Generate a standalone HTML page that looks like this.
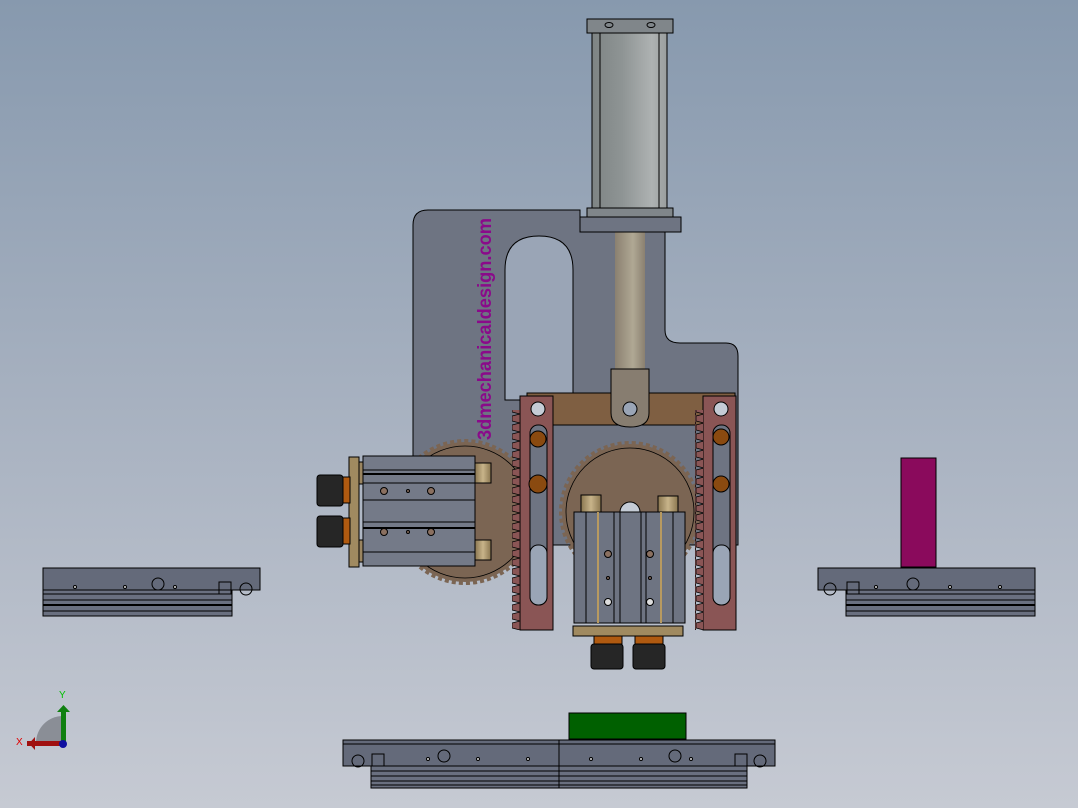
<!DOCTYPE html>
<html><head><meta charset="utf-8"><style>
html,body{margin:0;padding:0;width:1078px;height:808px;overflow:hidden}
svg{display:block}
</style></head><body>
<svg width="1078" height="808" viewBox="0 0 1078 808" xmlns="http://www.w3.org/2000/svg">
<defs>
<linearGradient id="bg" x1="0" y1="0" x2="0" y2="1">
<stop offset="0" stop-color="#8799ae"/><stop offset="0.5" stop-color="#a7b1c0"/><stop offset="1" stop-color="#c6cad3"/></linearGradient>
<linearGradient id="barrel" x1="0" x2="1">
<stop offset="0" stop-color="#7e8484"/><stop offset="0.4" stop-color="#8e9494"/><stop offset="0.8" stop-color="#aeb2b2"/><stop offset="1" stop-color="#9a9e9e"/></linearGradient>
<linearGradient id="rod" x1="0" x2="1">
<stop offset="0" stop-color="#8a8070"/><stop offset="0.6" stop-color="#b0a894"/><stop offset="1" stop-color="#8a8070"/></linearGradient>
<linearGradient id="pin" x1="0" x2="1">
<stop offset="0" stop-color="#8a7650"/><stop offset="0.5" stop-color="#c8b48a"/><stop offset="1" stop-color="#8a7650"/></linearGradient>
<pattern id="teethL" width="8" height="9" patternUnits="userSpaceOnUse"><path d="M8 0 L0 2 L0 7 L8 9 Z" fill="#8a5555" stroke="#000" stroke-width="0.8"/></pattern>
</defs>
<rect width="1078" height="808" fill="url(#bg)"/>

<!-- plate -->
<path d="M428 210 H580 V232 H665 V330 Q665 343 680 343 H726 Q738 343 738 356 V545 H413 V225 Q413 210 428 210 Z" fill="#6e7482" stroke="#000" stroke-width="1"/>
<path d="M505 270 Q505 236 539 236 Q573 236 573 270 V400 H505 Z" fill="#9aa5b6" stroke="#000" stroke-width="1"/>

<!-- cylinder -->
<rect x="615" y="232" width="30" height="140" fill="url(#rod)"/>
<rect x="592" y="33" width="75" height="176" fill="url(#barrel)" stroke="#000"/>
<line x1="600" y1="33" x2="600" y2="208" stroke="#000"/><line x1="659" y1="33" x2="659" y2="208" stroke="#000"/>
<rect x="587" y="19" width="86" height="14" fill="#80868a" stroke="#000"/>
<ellipse cx="609" cy="25" rx="4" ry="2.5" fill="none" stroke="#000"/><ellipse cx="651" cy="25" rx="4" ry="2.5" fill="none" stroke="#000"/>
<rect x="587" y="208" width="86" height="9" fill="#80868a" stroke="#000"/>
<rect x="580" y="217" width="101" height="15" fill="#6e7482" stroke="#000"/>

<!-- bracket -->
<rect x="527" y="393" width="208" height="32" fill="#7f5f42" stroke="#000"/>
<path d="M611 369 H649 V413 Q649 427 630 427 Q611 427 611 413 Z" fill="#877d70" stroke="#000"/>
<circle cx="630" cy="409" r="7" fill="#9aa5b6" stroke="#000"/>

<!-- gears -->
<g fill="#7b6553" stroke="#000" stroke-width="0.8">
<circle cx="465" cy="512" r="70" stroke-dasharray="4 3" stroke-width="6" stroke="#7b6553"/>
<circle cx="465" cy="512" r="66"/>
<circle cx="630" cy="512" r="68" stroke-dasharray="4 3" stroke-width="6" stroke="#7b6553"/>
<circle cx="630" cy="512" r="64"/>
</g>

<!-- racks -->
<rect x="520" y="396" width="33" height="234" fill="#8a5555" stroke="#000"/>
<rect x="512" y="410" width="8" height="220" fill="url(#teethL)"/>
<rect x="703" y="396" width="33" height="234" fill="#8a5555" stroke="#000"/>
<rect x="695" y="410" width="8" height="220" fill="url(#teethL)"/>
<rect x="530" y="425" width="17" height="180" rx="8" fill="#6e7482" stroke="#000"/>
<rect x="713" y="425" width="17" height="180" rx="8" fill="#6e7482" stroke="#000"/>
<rect x="530" y="545" width="17" height="60" rx="8" fill="#9aa5b6" stroke="#000"/>
<rect x="713" y="545" width="17" height="60" rx="8" fill="#9aa5b6" stroke="#000"/>
<circle cx="538" cy="409" r="7" fill="#c5ccd6" stroke="#000"/><circle cx="721" cy="409" r="7" fill="#c5ccd6" stroke="#000"/>
<g fill="#8a4a10" stroke="#000"><circle cx="538" cy="439" r="8"/><circle cx="538" cy="484" r="9"/><circle cx="721" cy="437" r="8"/><circle cx="721" cy="484" r="8"/></g>

<!-- left gripper -->
<rect x="475" y="463" width="16" height="20" fill="url(#pin)" stroke="#000"/>
<rect x="475" y="540" width="16" height="20" fill="url(#pin)" stroke="#000"/>
<rect x="363" y="456" width="112" height="110" fill="#747a88" stroke="#000"/>
<g stroke="#000" stroke-width="1"><line x1="363" y1="470" x2="475" y2="470"/><line x1="363" y1="474" x2="475" y2="474" stroke-width="2"/><line x1="363" y1="483" x2="475" y2="483"/><line x1="363" y1="500" x2="475" y2="500"/><line x1="363" y1="522" x2="475" y2="522"/><line x1="363" y1="528" x2="475" y2="528" stroke-width="2"/><line x1="363" y1="552" x2="475" y2="552"/></g>
<g fill="#8a7060" stroke="#000"><circle cx="384" cy="491" r="3.5"/><circle cx="431" cy="491" r="3.5"/><circle cx="384" cy="532" r="3.5"/><circle cx="431" cy="532" r="3.5"/><circle cx="408" cy="491" r="1.5"/><circle cx="408" cy="532" r="1.5"/></g>
<rect x="356" y="462" width="7" height="22" fill="#9a8560" stroke="#000"/><rect x="356" y="540" width="7" height="22" fill="#9a8560" stroke="#000"/>
<rect x="349" y="457" width="10" height="110" fill="#a08a60" stroke="#000"/>
<rect x="341" y="477" width="9" height="26" fill="#b05a10" stroke="#000"/><rect x="341" y="518" width="9" height="26" fill="#b05a10" stroke="#000"/>
<rect x="317" y="475" width="26" height="31" rx="3" fill="#262626" stroke="#000"/><rect x="317" y="516" width="26" height="31" rx="3" fill="#262626" stroke="#000"/>

<!-- center gripper -->
<rect x="581" y="495" width="20" height="17" fill="url(#pin)" stroke="#000"/>
<rect x="658" y="496" width="20" height="16" fill="url(#pin)" stroke="#000"/>
<path d="M620 512 A10 10 0 0 1 640 512 Z" fill="#c5ccd6" stroke="#000"/>
<rect x="574" y="512" width="111" height="111" fill="#6e7482" stroke="#000"/>
<g stroke="#000"><line x1="586" y1="512" x2="586" y2="623"/><line x1="598" y1="512" x2="598" y2="623" stroke="#b89a60" stroke-width="2"/><line x1="614" y1="512" x2="614" y2="623"/><line x1="620" y1="512" x2="620" y2="623"/><line x1="641" y1="512" x2="641" y2="623"/><line x1="646" y1="512" x2="646" y2="623"/><line x1="661" y1="512" x2="661" y2="623" stroke="#b89a60" stroke-width="2"/><line x1="673" y1="512" x2="673" y2="623"/></g>
<g fill="#8a7060" stroke="#000"><circle cx="608" cy="554" r="3.5"/><circle cx="650" cy="554" r="3.5"/><circle cx="608" cy="602" r="3.5" fill="#ddd"/><circle cx="650" cy="602" r="3.5" fill="#ddd"/><circle cx="608" cy="578" r="1.5"/><circle cx="650" cy="578" r="1.5"/></g>
<rect x="573" y="626" width="110" height="10" fill="#a08a60" stroke="#000"/>
<rect x="594" y="636" width="28" height="8" fill="#b05a10" stroke="#000"/><rect x="635" y="636" width="28" height="8" fill="#b05a10" stroke="#000"/>
<rect x="591" y="644" width="32" height="25" rx="3" fill="#262626" stroke="#000"/><rect x="633" y="644" width="32" height="25" rx="3" fill="#262626" stroke="#000"/>

<!-- text -->
<text transform="translate(491,440) rotate(-90)" font-family="'Liberation Sans',sans-serif" font-size="19.5" font-weight="bold" fill="#8a0a8a" textLength="222" lengthAdjust="spacingAndGlyphs">3dmechanicaldesign.com</text>

<!-- magenta block -->
<rect x="901" y="458" width="35" height="109" fill="#8a0a5c" stroke="#000"/>
<!-- green block -->
<rect x="569" y="713" width="117" height="26" fill="#006000" stroke="#000"/>

<!-- conveyors -->
<g stroke="#000" stroke-width="1">
<rect x="43" y="590" width="189" height="26" fill="#6a7080"/>
<rect x="43" y="568" width="217" height="22" fill="#646a7a"/>
<line x1="43" y1="594" x2="232" y2="594"/><line x1="43" y1="600" x2="232" y2="600"/><line x1="43" y1="605" x2="232" y2="605" stroke-width="2"/><line x1="43" y1="611" x2="232" y2="611"/>
<circle cx="158" cy="584" r="6" fill="none"/><circle cx="75" cy="587" r="1.5" fill="#ddd"/><circle cx="125" cy="587" r="1.5" fill="#ddd"/><circle cx="175" cy="587" r="1.5" fill="#ddd"/>
<rect x="219" y="582" width="12" height="12" fill="none"/><circle cx="246" cy="589" r="6" fill="none"/>

<rect x="846" y="590" width="189" height="26" fill="#6a7080"/>
<rect x="818" y="568" width="217" height="22" fill="#646a7a"/>
<line x1="846" y1="594" x2="1035" y2="594"/><line x1="846" y1="600" x2="1035" y2="600"/><line x1="846" y1="605" x2="1035" y2="605" stroke-width="2"/><line x1="846" y1="611" x2="1035" y2="611"/>
<circle cx="913" cy="584" r="6" fill="none"/><circle cx="876" cy="587" r="1.5" fill="#ddd"/><circle cx="950" cy="587" r="1.5" fill="#ddd"/><circle cx="1000" cy="587" r="1.5" fill="#ddd"/>
<rect x="847" y="582" width="12" height="12" fill="none"/><circle cx="830" cy="589" r="6" fill="none"/>

<rect x="371" y="766" width="376" height="22" fill="#6a7080"/>
<rect x="343" y="740" width="432" height="26" fill="#646a7a"/>
<line x1="343" y1="744" x2="775" y2="744"/><line x1="559" y1="740" x2="559" y2="788"/>
<line x1="371" y1="771" x2="747" y2="771"/><line x1="371" y1="776" x2="747" y2="776"/><line x1="371" y1="781" x2="747" y2="781"/><line x1="371" y1="785" x2="747" y2="785"/>
<circle cx="444" cy="756" r="6" fill="none"/><circle cx="675" cy="756" r="6" fill="none"/>
<circle cx="428" cy="759" r="1.5" fill="#ddd"/><circle cx="478" cy="759" r="1.5" fill="#ddd"/><circle cx="528" cy="759" r="1.5" fill="#ddd"/><circle cx="591" cy="759" r="1.5" fill="#ddd"/><circle cx="641" cy="759" r="1.5" fill="#ddd"/><circle cx="691" cy="759" r="1.5" fill="#ddd"/>
<rect x="372" y="754" width="12" height="12" fill="none"/><rect x="735" y="754" width="12" height="12" fill="none"/>
<circle cx="358" cy="761" r="6" fill="none"/><circle cx="760" cy="761" r="6" fill="none"/>
</g>

<!-- triad -->
<path d="M36 743 A27 27 0 0 1 63 716 V743 Z" fill="#8a8e96"/>
<rect x="27" y="741" width="36" height="5" fill="#a01010"/><path d="M27 737 L27 750 L21 743.5 Z" transform="translate(8,0)" fill="#a01010"/>
<rect x="61" y="712" width="5" height="32" fill="#108010"/><path d="M57 712 L70 712 L63.5 705 Z" fill="#108010"/>
<circle cx="63" cy="744" r="4" fill="#1010a0"/>
<text x="16" y="745" font-family="'Liberation Sans',sans-serif" font-size="10" fill="#e00000">X</text>
<text x="59" y="698" font-family="'Liberation Sans',sans-serif" font-size="10" fill="#00c000">Y</text>
</svg>
</body></html>
